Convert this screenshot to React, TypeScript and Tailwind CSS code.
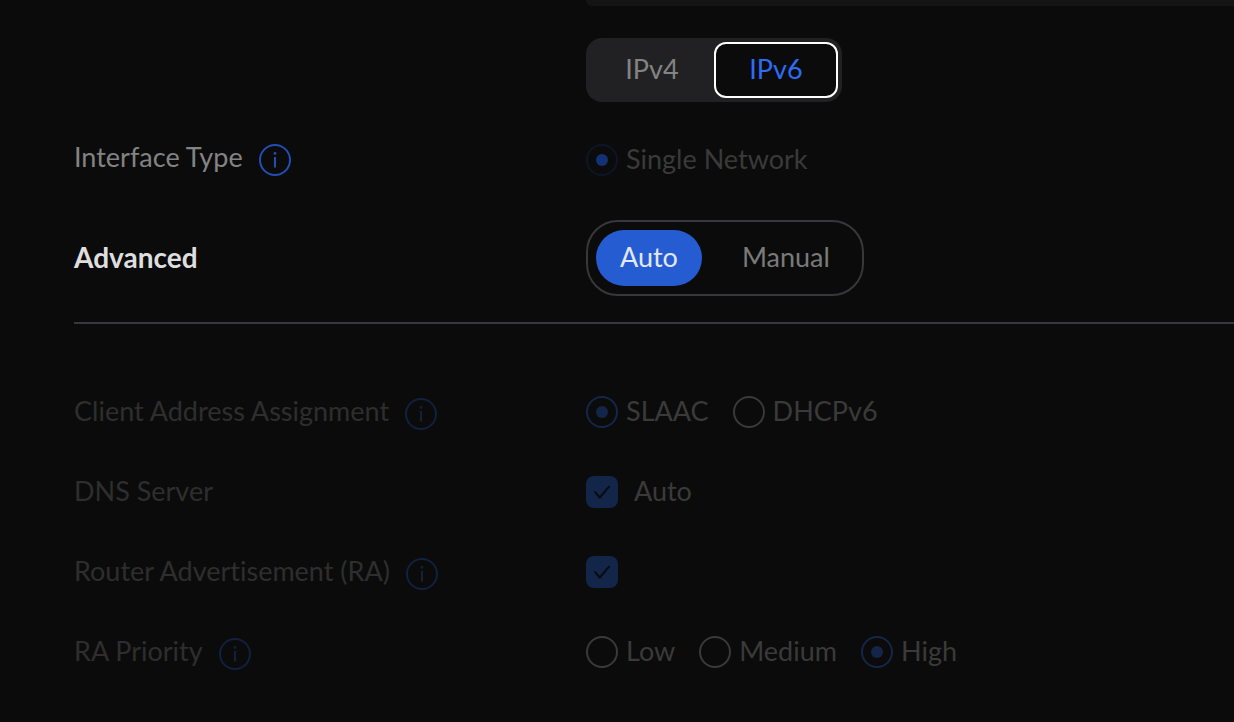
import { useState, type ReactNode } from "react";

const blueRadio = "border-[#15264a] before:bg-[#14254a]";
const idleRadio = "border-[#3a3a3c] before:bg-transparent";

export default function App() {
  const [ipVersion, setIpVersion] = useState("IPv6");
  const [advanced, setAdvanced] = useState("Auto");
  const [assignment, setAssignment] = useState("SLAAC");
  const [priority, setPriority] = useState("High");

  return (
    <main className="min-h-screen overflow-hidden bg-[#0b0b0b] pb-12 pl-[74px] font-['Lato',sans-serif] text-[27px] leading-9 [font-variant-ligatures:none]">
      {/* bottom edge of the field above */}
      <div className="ml-[512px] h-[6px] rounded-bl-lg bg-[#141415]" />

      <div className="ml-[512px] mt-8 flex">
        <div className="flex rounded-2xl bg-[#212123] p-1">
          {["IPv4", "IPv6"].map((version) => (
            <button
              key={version}
              type="button"
              onClick={() => setIpVersion(version)}
              className={`h-14 w-[124px] rounded-xl border-2 pb-[2px] ${
                ipVersion === version
                  ? "border-white bg-[#0b0b0b] text-[#2e6bf5]"
                  : "border-transparent text-[#838383]"
              }`}
            >
              {version}
            </button>
          ))}
        </div>
      </div>

      <div className="mt-10 flex h-9 items-center">
        <div className="flex w-[512px] shrink-0 items-center gap-4 text-[#838383]">
          <span className="pb-[6px]">Interface Type</span>
          <InfoButton label="Interface Type info" className="text-[#214fb4]" />
        </div>
        <Radio
          name="interface-type"
          label="Single Network"
          checked
          onChange={() => {}}
          tone="border-[#0d1628] before:bg-[#133275]"
        />
      </div>

      <div className="mt-[42px] flex items-center">
        <h2 className="w-[512px] shrink-0 pb-[2px] text-[28px] font-bold text-[#dedede]">
          Advanced
        </h2>
        <div className="flex gap-4 rounded-[32px] border-2 border-[#38383c] p-2">
          {["Auto", "Manual"].map((mode) => (
            <button
              key={mode}
              type="button"
              onClick={() => setAdvanced(mode)}
              className={`h-14 rounded-[28px] px-6 pb-[2px] ${
                advanced === mode
                  ? "bg-[#265cd1] text-[#e1e8f8]"
                  : "text-[#7a7a7a]"
              }`}
            >
              {mode}
            </button>
          ))}
        </div>
      </div>

      <hr className="mt-[26px] border-t-2 border-[#38383c]" />

      <div className="mt-[68px] flex flex-col gap-10">
        <Row label="Client Address Assignment" info>
          {["SLAAC", "DHCPv6"].map((option) => (
            <Radio
              key={option}
              name="assignment"
              label={option}
              checked={assignment === option}
              onChange={() => setAssignment(option)}
              tone={assignment === option ? blueRadio : idleRadio}
            />
          ))}
        </Row>
        <Row label="DNS Server">
          <div className="flex items-center gap-4">
            <Checkbox id="dns-auto" />
            <label htmlFor="dns-auto" className="pb-[2px] text-[#3a3a3a]">
              Auto
            </label>
          </div>
        </Row>
        <Row label="Router Advertisement (RA)" htmlFor="router-ra" info>
          <Checkbox id="router-ra" />
        </Row>
        <Row label="RA Priority" info>
          {["Low", "Medium", "High"].map((option) => (
            <Radio
              key={option}
              name="priority"
              label={option}
              checked={priority === option}
              onChange={() => setPriority(option)}
              tone={priority === option ? blueRadio : idleRadio}
            />
          ))}
        </Row>
      </div>
    </main>
  );
}

function Row({
  label,
  htmlFor,
  info,
  children,
}: {
  label: string;
  htmlFor?: string;
  info?: boolean;
  children: ReactNode;
}) {
  return (
    <div className="flex h-10 items-center">
      <div className="flex w-[512px] shrink-0 items-center gap-4 text-[#2e2e2e]">
        {htmlFor ? (
          <label htmlFor={htmlFor} className="pb-[2px]">
            {label}
          </label>
        ) : (
          <span className="pb-[2px]">{label}</span>
        )}
        {info && (
          <InfoButton label={`${label} info`} className="mt-1 text-[#12213f]" />
        )}
      </div>
      <div className="flex items-center gap-6">{children}</div>
    </div>
  );
}

function Radio({
  name,
  label,
  checked,
  onChange,
  tone,
}: {
  name: string;
  label: string;
  checked: boolean;
  onChange: () => void;
  tone: string;
}) {
  return (
    <label className="flex items-center gap-2 text-[#3a3a3a]">
      <input
        type="radio"
        name={name}
        checked={checked}
        onChange={onChange}
        className={`grid size-8 shrink-0 appearance-none place-items-center rounded-full border-2 before:size-3 before:rounded-full before:content-[''] ${tone}`}
      />
      <span className="pb-[2px]">{label}</span>
    </label>
  );
}

function Checkbox({ id }: { id: string }) {
  return (
    <span className="grid size-8">
      <input
        id={id}
        type="checkbox"
        defaultChecked
        className="peer col-start-1 row-start-1 size-8 appearance-none rounded-lg bg-[#1c1c1e] checked:bg-[#14254a]"
      />
      <svg
        viewBox="0 0 32 32"
        className="pointer-events-none invisible col-start-1 row-start-1 size-8 peer-checked:visible"
        fill="none"
        stroke="#0b0b0b"
        strokeWidth="2"
        strokeLinecap="round"
        strokeLinejoin="round"
      >
        <path d="M9 16.2l4.8 5.3L23 10.7" />
      </svg>
    </span>
  );
}

function InfoButton({ label, className }: { label: string; className: string }) {
  return (
    <button type="button" aria-label={label} className={className}>
      <svg viewBox="0 0 32 32" className="size-8" fill="none">
        <circle cx="16" cy="16" r="15" stroke="currentColor" strokeWidth="2" />
        <circle cx="16" cy="9.4" r="1.4" fill="currentColor" />
        <path d="M16 13v10.6" stroke="currentColor" strokeWidth="2" />
      </svg>
    </button>
  );
}
